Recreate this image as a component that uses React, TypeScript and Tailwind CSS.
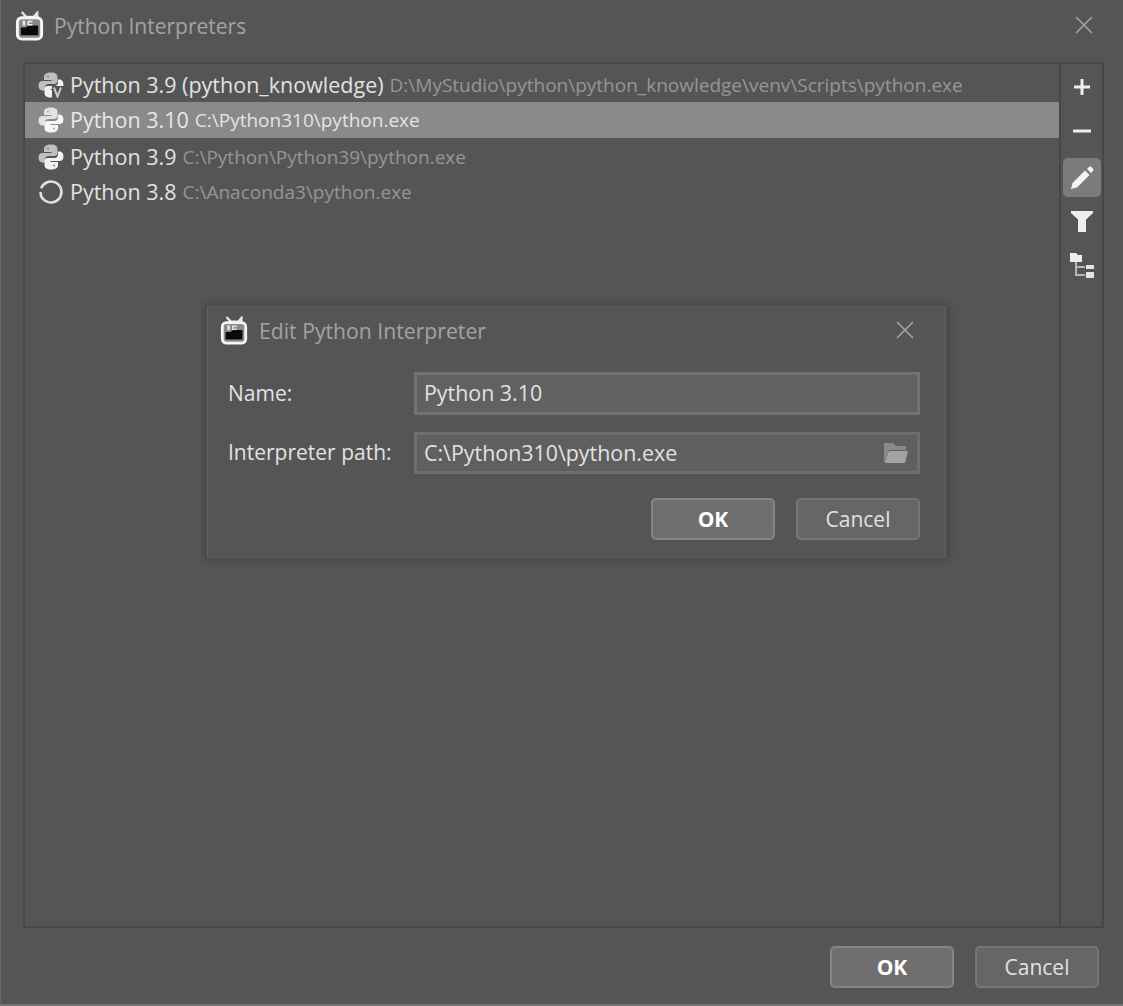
import React from "react";

const F = "[font-family:'Open_Sans','Noto_Sans',sans-serif]";

function PcIcon({ className = "" }: { className?: string }) {
  return (
    <svg viewBox="0 0 32 32" className={className}>
      <path d="M8 1l4.500 5h8L24 2v5" fill="none" stroke="#e6e6e6" strokeWidth="2.400" />
      <rect x="3.500" y="7" width="25" height="22" rx="4.500" fill="#8a8a8a" stroke="#f6f6f6" strokeWidth="3" />
      <path d="M7 17h5l3-2h10v10H7z" fill="#0a0a0a" />
      <path d="M9 10h2.500v5H9zM14 10h5v1.500h-3.500v2H19V15h-5z" fill="#ececec" />
    </svg>
  );
}

function PyIcon({ top = "#bfbfbf", bottom = "#f2f2f2", badge = false, hole = "#8f8f8f" }: { top?: string; bottom?: string; badge?: boolean; hole?: string }) {
  return (
    <svg viewBox="0 0 26 26" className="w-[26px] h-[26px] shrink-0">
      <path d="M13 0.500C8.500 0.500 6 2 6 5V8h7.500v1H4.500C1.800 9 .5 11 .5 13.500S1.800 18.500 4.500 18.500H7v-3c0-2.400 1.600-3.500 4-3.500h5c2.200 0 3.500-1 3.500-3V5C19.500 2 17.500 .5 13 .5z" fill={top} />
      <path d="M13 25.500c4.500 0 7-1.500 7-4.500V18h-7.500v-1h9c2.700 0 4-2 4-4.500S24.200 7.500 21.500 7.500H20v3c0 2.400-1.600 3.500-4 3.500h-6c-2.200 0-3.500 1-3.500 3v4C6.500 24 8.500 25.500 13 25.500z" fill={bottom} />
      <circle cx="10" cy="4.500" r="1.100" fill={hole} />
      <circle cx="16" cy="21.500" r="1.100" fill={hole} />
      {badge && (
        <>
          <rect x="14" y="14" width="12" height="12" fill="#555555" />
          <path d="M16 15.500l3.500 9 3.500-9" fill="none" stroke="#d0d0d0" strokeWidth="2" />
        </>
      )}
    </svg>
  );
}

function Spinner() {
  return (
    <svg viewBox="0 0 26 26" className="w-[26px] h-[26px] shrink-0">
      <circle cx="13" cy="13" r="10.500" fill="none" stroke="#e0e0e0" strokeWidth="2.600" strokeDasharray="62 4" transform="rotate(200 13 13)" />
    </svg>
  );
}

function Close() {
  return (
    <svg viewBox="0 0 18 18" className="w-[18px] h-[18px]">
      <path d="M1 1l16 16M17 1L1 17" stroke="#a6a6a6" strokeWidth="1.500" fill="none" />
    </svg>
  );
}

function Row({ icon, name, path, active, extra = "" }: { icon: React.ReactNode; name: string; path: string; active?: boolean; extra?: string }) {
  return (
    <div className={`h-9 flex items-center pl-[13px] ${active ? "bg-[#8a8a8a]" : ""} ${extra}`}>
      {icon}
      <span className={`ml-[6px] text-[21.5px] whitespace-nowrap ${active ? "text-[#e8e8e8]" : "text-[#e2e2e2]"}`}>{name}</span>
      <span className={`ml-[6px] text-[19px] whitespace-nowrap ${active ? "text-[#e4e4e4]" : "text-[#969696]"}`}>{path}</span>
    </div>
  );
}

function Btn({ children, strong }: { children: React.ReactNode; strong?: boolean }) {
  return (
    <button
      className={`w-[124px] h-[42px] rounded-[5px] border-2 flex items-center justify-center pt-px text-[21px] ${
        strong
          ? "bg-[#6f6f6f] border-[#858585] text-white font-bold"
          : "bg-[#666666] border-[#767676] text-[#e2e2e2]"
      }`}
    >
      {children}
    </button>
  );
}

export default function App() {
  return (
    <div className={`relative w-[1123px] h-[1006px] bg-[#555555] overflow-hidden flex flex-col border-l border-b-2 border-l-[#666666] border-b-[#747474] ${F}`}>
      <div className="h-[62px] shrink-0 flex items-start pt-[11px] pl-[13px] pr-[30px]">
        <PcIcon className="w-[31px] h-[31px]" />
        <span className="ml-[9px] text-[21px] text-[#a3a3a3]">Python Interpreters</span>
        <span className="ml-auto mt-[5px]"><Close /></span>
      </div>

      <div className="ml-[22px] w-[1081px] h-[866px] shrink-0 border-2 border-[#474747] flex">
        <div className="flex-1 border-r-2 border-[#474747] pt-[2px] min-w-0">
          <Row extra="pt-[2px]" icon={<PyIcon badge />} name="Python 3.9 (python_knowledge)" path="D:\MyStudio\python\python_knowledge\venv\Scripts\python.exe" />
          <Row active icon={<PyIcon top="#e2e2e2" bottom="#f6f6f6" hole="#b0b0b0" />} name="Python 3.10" path="C:\Python310\python.exe" />
          <Row extra="mt-px" icon={<PyIcon />} name="Python 3.9" path="C:\Python\Python39\python.exe" />
          <Row extra="-mt-px" icon={<Spinner />} name="Python 3.8" path="C:\Anaconda3\python.exe" />
        </div>
        <div className="w-[41px] shrink-0 flex flex-col items-center pt-[5px]">
          <div className="h-9 flex items-center justify-center">
            <svg viewBox="0 0 20 20" className="w-5 h-5"><path d="M10 2v16M2 10h16" stroke="#eeeeee" strokeWidth="3" /></svg>
          </div>
          <div className="h-[38px] mt-[7px] flex items-center justify-center">
            <svg viewBox="0 0 20 20" className="w-5 h-5"><path d="M1 10h18" stroke="#eeeeee" strokeWidth="3" /></svg>
          </div>
          <div className="w-[38px] h-[39px] mt-[8px] rounded-[5px] bg-[#7b7b7b] flex items-center justify-center">
            <svg viewBox="0 0 26 26" className="w-[26px] h-[26px]">
              <path d="M2 24l1.500-6L16 5.500l4.500 4.500L8 22.500z" fill="#f2f2f2" />
              <path d="M18 4l2-2c.8-.6 1.600-.6 2.300 0l1.700 1.700c.6.700.6 1.500 0 2.300l-2 2z" fill="#f2f2f2" />
            </svg>
          </div>
          <div className="h-9 mt-[6px] flex items-center justify-center">
            <svg viewBox="0 0 24 24" className="w-6 h-6"><path d="M1 2h22v2l-7 6.500V23h-8V10.500L1 4z" fill="#eeeeee" /></svg>
          </div>
          <div className="h-9 mt-[9px] flex items-center justify-center">
            <svg viewBox="0 0 26 28" className="w-[26px] h-7">
              <path d="M1 1h6l2 2h4v7H1z" fill="#eeeeee" />
              <path d="M7 10v13h9M7 15h9" stroke="#b8b8b8" strokeWidth="2" fill="none" />
              <rect x="17" y="13" width="8" height="4" fill="#e4e4e4" />
              <rect x="17" y="20" width="8" height="6" fill="#e4e4e4" />
            </svg>
          </div>
        </div>
      </div>

      <div className="flex justify-end gap-[21px] pt-[18px] pr-[24px]">
        <Btn strong>OK</Btn>
        <Btn>Cancel</Btn>
      </div>

      <div className="absolute left-[206px] top-[306px] w-[739px] h-[252px] bg-[#555555] border border-[#626262] shadow-[0_0_8px_2px_rgba(0,0,0,0.22)] flex flex-col">
        <div className="h-[48px] shrink-0 flex items-center pl-[11px] pr-[31px]">
          <PcIcon className="w-[30px] h-[30px]" />
          <span className="ml-[10px] text-[21.2px] text-[#a3a3a3]">Edit Python Interpreter</span>
          <span className="ml-auto -mt-[2px]"><Close /></span>
        </div>
        <div className="flex items-center mt-[17px] pl-5 pr-[25px]">
          <span className="w-[186px] text-[21px] text-[#e2e2e2]">Name:</span>
          <div className="flex-1 h-[43px] bg-[#616161] border-[3px] border-[#727272] flex items-center pl-[7px] text-[21.4px] text-[#e2e2e2]">Python 3.10</div>
        </div>
        <div className="flex items-center mt-[17px] pl-5 pr-[25px]">
          <span className="w-[186px] text-[21px] text-[#e2e2e2] whitespace-nowrap">Interpreter path:</span>
          <div className="flex-1 h-[42px] bg-[#5f5f5f] border-[3px] border-[#6e6e6e] flex items-center pl-[7px] pr-[8px] text-[21.4px] text-[#e2e2e2]">
            <span>C:\Python310\python.exe</span>
            <svg viewBox="0 0 26 22" className="ml-auto w-[26px] h-[22px]">
              <path d="M1 1h9l3 3h10v4H6L3 20H1z" fill="#8a8a8a" />
              <path d="M6 9h19l-3 12H2z" fill="#a3a3a3" />
            </svg>
          </div>
        </div>
        <div className="flex justify-end gap-[21px] pt-[24px] pr-[25px]">
          <Btn strong>OK</Btn>
          <Btn>Cancel</Btn>
        </div>
      </div>
    </div>
  );
}
